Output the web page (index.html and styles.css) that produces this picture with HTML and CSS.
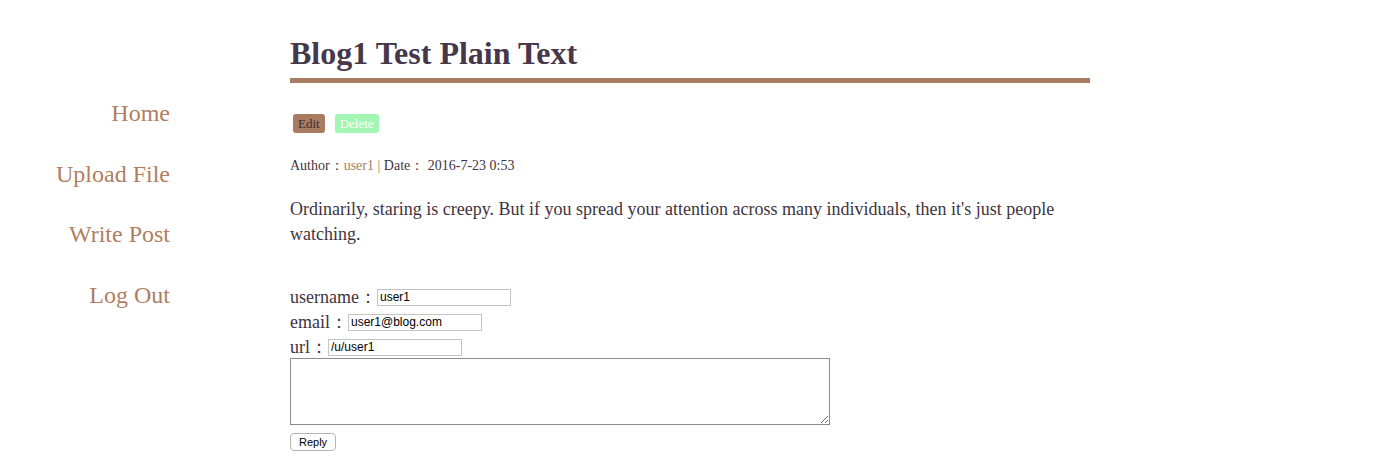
FILE: index.html
```html
<!DOCTYPE html>
<html>
<head>
<meta charset="utf-8">
<link rel="stylesheet" href="styles.css">
</head>
<body>
<div class="page">
  <nav class="sidebar">
    <a class="nav-link" href="#">Home</a>
    <a class="nav-link" href="#">Upload File</a>
    <a class="nav-link" href="#">Write Post</a>
    <a class="nav-link" href="#">Log Out</a>
  </nav>
  <main class="main">
    <h1 class="title">Blog1 Test Plain Text</h1>
    <div class="actions">
      <a class="btn btn-edit" href="#">Edit</a>
      <a class="btn btn-delete" href="#">Delete</a>
    </div>
    <p class="meta">Author：<a class="author" href="#">user1</a> <span class="sep">|</span> Date： 2016-7-23 0:53</p>
    <p class="content">Ordinarily, staring is creepy. But if you spread your attention across many individuals, then it's just people watching.</p>
    <form class="reply-form">
      <div class="field">username：<input class="text-input" type="text" value="user1"></div>
      <div class="field">email：<input class="text-input" type="text" value="user1@blog.com"></div>
      <div class="field">url：<input class="text-input" type="text" value="/u/user1"></div>
      <textarea class="comment-box"></textarea>
      <div class="submit-row"><button class="reply-btn" type="button">Reply</button></div>
    </form>
  </main>
</div>
</body>
</html>
```
FILE: styles.css
```css
body {
  margin: 8px;
  font-family: "Liberation Serif", "Times New Roman", serif;
  color: #3f3440;
  background: #fff;
}
.page {
  display: flex;
  gap: 120px;
}
.sidebar {
  width: 162px;
  display: flex;
  flex-direction: column;
  align-items: flex-end;
  padding-top: 90px;
  gap: 29.5px;
}
.nav-link {
  font-size: 24px;
  line-height: 31px;
  color: #b07e60;
  text-decoration: none;
}
.main {
  width: 800px;
}
.title {
  font-size: 32px;
  font-weight: bold;
  color: #46384a;
  margin: 27px 0 0;
  padding-bottom: 6px;
  line-height: 37px;
  border-bottom: 5px solid #a97c62;
}
.actions {
  margin-top: 31px;
  display: flex;
  gap: 10px;
  padding-left: 3px;
}
.btn {
  font-size: 13px;
  line-height: 19px;
  padding: 0 5px;
  border-radius: 3px;
  text-decoration: none;
}
.btn-edit {
  background: #a97c62;
  color: #3a2e32;
}
.btn-delete {
  background: #a2f5b3;
  color: #fff;
}
.meta {
  font-size: 14px;
  margin: 24px 0 0;
  line-height: 18px;
}
.author {
  color: #a97c62;
  text-decoration: none;
}
.sep {
  color: #a97c62;
}
.content {
  font-size: 18px;
  line-height: 25px;
  margin: 22px 0 0;
}
.reply-form {
  margin-top: 38px;
}
.field {
  font-size: 18px;
  line-height: 25px;
  height: 25px;
}
.text-input {
  font-family: "Liberation Sans", Arial, sans-serif;
  font-size: 12px;
  width: 134px;
  height: 17px;
  box-sizing: border-box;
  border: 1px solid #c4c4c4;
  padding: 0 2px;
  vertical-align: 2px;
}
.comment-box {
  display: block;
  width: 540px;
  height: 67px;
  box-sizing: border-box;
  border: 1px solid #8c8c8c;
  margin: -2px 0 0;
}
.submit-row {
  margin-top: 7px;
}
.reply-btn {
  font-family: "Liberation Sans", Arial, sans-serif;
  font-size: 11px;
  height: 18px;
  padding: 0 8px;
  background: #fff;
  border: 1px solid #b5b5b5;
  border-radius: 4px;
}
```
